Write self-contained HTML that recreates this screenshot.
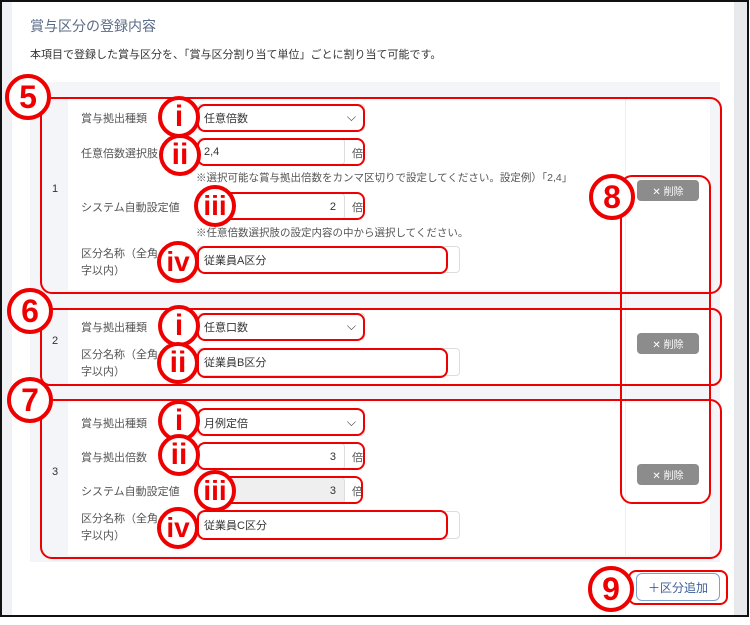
<!DOCTYPE html>
<html><head><meta charset="utf-8"><style>
*{box-sizing:border-box;margin:0;padding:0}
body{width:750px;height:625px;background:#fff;position:relative;font-family:"Liberation Sans","Noto Sans CJK JP",sans-serif;overflow:hidden;color:#333}
.a{position:absolute}
.frame{left:0;top:0;width:749px;height:617px;border:2px solid #111}
.t{font-size:12px;white-space:nowrap}
.lbl{font-size:11px;color:#555;position:absolute;white-space:nowrap}
.inp{position:absolute;background:#fff;border:1px solid #ddd;border-radius:4px;font-size:11px;padding-left:6px;display:flex;align-items:center}
.rb{position:absolute;border:2.5px solid #e00;border-radius:8px}
.c{position:absolute;border:4px solid #e00;border-radius:50%;background:#fff;color:#e00;font-weight:bold;display:flex;align-items:center;justify-content:center;font-family:"Liberation Sans",sans-serif}
.del{position:absolute;width:62px;height:21px;background:#8c8c8c;border-radius:4px;color:#fff;font-size:10px;display:flex;align-items:center;justify-content:center}
.row{position:absolute;left:68px;width:642px;background:#fff}
</style></head><body>
<div class="a" style="left:2px;top:2px;width:10px;height:614px;background:#f0f1f4"></div>
<div class="a" style="left:734px;top:2px;width:14px;height:614px;background:#e8e9ec"></div>
<div class="a frame"></div>
<div class="a" style="left:30px;top:16px;font-size:14px;color:#5b6b87">賞与区分の登録内容</div>
<div class="a t" style="left:30px;top:46px;font-size:11px;color:#333">本項目で登録した賞与区分を、「賞与区分割り当て単位」ごとに割り当て可能です。</div>
<div class="a" style="left:30px;top:82px;width:690px;height:480px;background:#f4f5f9"></div>
<div class="row" style="top:98px;height:192px"></div>
<div class="row" style="top:310px;height:74px"></div>
<div class="row" style="top:400px;height:155px"></div>
<div class="a" style="left:625px;top:98px;width:1px;height:457px;background:#eceef2"></div>

<!-- row 1 -->
<div class="a t" style="left:52px;top:183px;font-size:11px">1</div>
<div class="lbl" style="left:81px;top:110px">賞与拠出種類</div>
<div class="inp" style="left:197px;top:104px;width:168px;height:27px">任意倍数<span style="position:absolute;right:8px;font-size:12px">⌵</span></div>
<div class="lbl" style="left:81px;top:145px">任意倍数選択肢</div>
<div class="inp" style="left:197px;top:138px;width:148px;height:27px">2,4</div>
<div class="lbl" style="left:352px;top:145px">倍</div>
<div class="lbl" style="left:196px;top:170px;font-size:10.5px">※選択可能な賞与拠出倍数をカンマ区切りで設定してください。設定例）「2,4」</div>
<div class="lbl" style="left:81px;top:199px">システム自動設定値</div>
<div class="inp" style="left:213px;top:193px;width:132px;height:27px;justify-content:flex-end;padding-right:8px">2</div>
<div class="lbl" style="left:352px;top:199px">倍</div>
<div class="lbl" style="left:196px;top:225px;font-size:10.5px">※任意倍数選択肢の設定内容の中から選択してください。</div>
<div class="lbl" style="left:81px;top:246px;line-height:17px">区分名称（全角<br>字以内）</div>
<div class="inp" style="left:197px;top:246px;width:263px;height:27px">従業員A区分</div>
<div class="del" style="left:637px;top:180px">✕ 削除</div>

<!-- row 2 -->
<div class="a t" style="left:52px;top:335px;font-size:11px">2</div>
<div class="lbl" style="left:81px;top:319px">賞与拠出種類</div>
<div class="inp" style="left:197px;top:313px;width:168px;height:27px">任意口数<span style="position:absolute;right:8px;font-size:12px">⌵</span></div>
<div class="lbl" style="left:81px;top:347px;line-height:17px">区分名称（全角<br>字以内）</div>
<div class="inp" style="left:197px;top:348px;width:263px;height:28px">従業員B区分</div>
<div class="del" style="left:637px;top:333px">✕ 削除</div>

<!-- row 3 -->
<div class="a t" style="left:52px;top:466px;font-size:11px">3</div>
<div class="lbl" style="left:81px;top:415px">賞与拠出種類</div>
<div class="inp" style="left:197px;top:409px;width:168px;height:27px">月例定倍<span style="position:absolute;right:8px;font-size:12px">⌵</span></div>
<div class="lbl" style="left:81px;top:449px">賞与拠出倍数</div>
<div class="inp" style="left:197px;top:443px;width:148px;height:27px;justify-content:flex-end;padding-right:8px">3</div>
<div class="lbl" style="left:352px;top:449px">倍</div>
<div class="lbl" style="left:81px;top:483px">システム自動設定値</div>
<div class="inp" style="left:213px;top:477px;width:132px;height:27px;background:#efefef;justify-content:flex-end;padding-right:8px">3</div>
<div class="lbl" style="left:352px;top:483px">倍</div>
<div class="lbl" style="left:81px;top:511px;line-height:17px">区分名称（全角<br>字以内）</div>
<div class="inp" style="left:197px;top:511px;width:263px;height:28px">従業員C区分</div>
<div class="del" style="left:637px;top:464px">✕ 削除</div>

<div class="a" style="left:636px;top:573px;width:84px;height:28px;border:1px solid #7fa0d0;border-radius:6px;color:#3c5f99;font-size:12px;display:flex;align-items:center;justify-content:center">＋区分追加</div>

<!-- red annotation boxes -->
<div class="rb" style="left:40px;top:97px;width:682px;height:197px;border-radius:12px"></div>
<div class="rb" style="left:40px;top:308px;width:682px;height:78px;border-radius:10px"></div>
<div class="rb" style="left:40px;top:399px;width:682px;height:160px;border-radius:12px"></div>
<div class="rb" style="left:620px;top:175px;width:91px;height:329px;border-radius:12px"></div>
<div class="rb" style="left:628px;top:570px;width:100px;height:35px"></div>
<div class="rb" style="left:197px;top:104px;width:168px;height:28px"></div>
<div class="rb" style="left:197px;top:138px;width:168px;height:28px"></div>
<div class="rb" style="left:213px;top:192px;width:152px;height:28px"></div>
<div class="rb" style="left:197px;top:246px;width:251px;height:28px"></div>
<div class="rb" style="left:197px;top:313px;width:168px;height:28px"></div>
<div class="rb" style="left:197px;top:348px;width:251px;height:30px"></div>
<div class="rb" style="left:197px;top:408px;width:168px;height:28px"></div>
<div class="rb" style="left:197px;top:442px;width:168px;height:28px"></div>
<div class="rb" style="left:213px;top:476px;width:150px;height:28px"></div>
<div class="rb" style="left:197px;top:510px;width:251px;height:30px"></div>
<div class="a" style="left:40px;top:115px;width:3px;height:1px"></div>

<!-- circles -->
<div class="c" style="left:5px;top:74px;width:46px;height:46px;font-size:32px">5</div>
<div class="c" style="left:7px;top:288px;width:46px;height:46px;font-size:32px">6</div>
<div class="c" style="left:7px;top:377px;width:46px;height:46px;font-size:32px">7</div>
<div class="c" style="left:589px;top:174px;width:46px;height:46px;font-size:32px">8</div>
<div class="c" style="left:588px;top:566px;width:46px;height:46px;font-size:32px">9</div>
<div class="c" style="left:158px;top:96px;width:42px;height:42px;font-size:30px">i</div>
<div class="c" style="left:159px;top:134px;width:42px;height:42px;font-size:30px">ii</div>
<div class="c" style="left:194px;top:185px;width:42px;height:42px;font-size:28px">iii</div>
<div class="c" style="left:157px;top:241px;width:42px;height:42px;font-size:28px">iv</div>
<div class="c" style="left:158px;top:305px;width:42px;height:42px;font-size:30px">i</div>
<div class="c" style="left:157px;top:342px;width:42px;height:42px;font-size:30px">ii</div>
<div class="c" style="left:158px;top:400px;width:42px;height:42px;font-size:30px">i</div>
<div class="c" style="left:158px;top:434px;width:42px;height:42px;font-size:30px">ii</div>
<div class="c" style="left:194px;top:470px;width:42px;height:42px;font-size:28px">iii</div>
<div class="c" style="left:157px;top:507px;width:42px;height:42px;font-size:28px">iv</div>
</body></html>
